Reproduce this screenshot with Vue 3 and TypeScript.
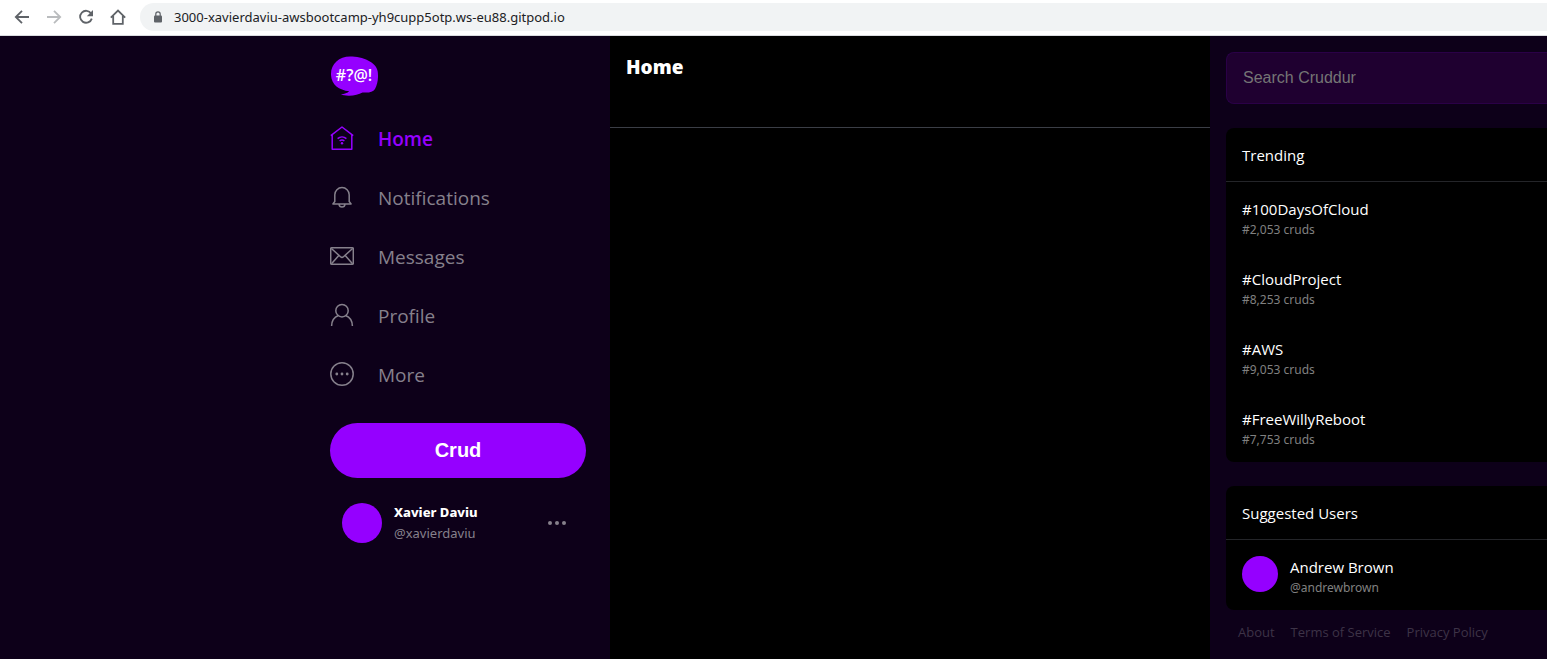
<script setup lang="ts">
import { ref } from 'vue'

interface Trend {
  tag: string
  count: string
}

const address = ref('3000-xavierdaviu-awsbootcamp-yh9cupp5otp.ws-eu88.gitpod.io')
const query = ref('')
const navItems = ['Home', 'Notifications', 'Messages', 'Profile', 'More']
const active = ref('Home')

const trends: Trend[] = [
  { tag: '#100DaysOfCloud', count: '#2,053 cruds' },
  { tag: '#CloudProject', count: '#8,253 cruds' },
  { tag: '#AWS', count: '#9,053 cruds' },
  { tag: '#FreeWillyReboot', count: '#7,753 cruds' },
]

const users = [{ name: 'Andrew Brown', handle: '@andrewbrown' }]
const footerLinks = ['About', 'Terms of Service', 'Privacy Policy']
</script>

<template>
  <div class="browser">
    <div class="toolbar">
      <button class="tool" type="button" aria-label="Back">
        <svg viewBox="0 0 16 16"><path d="M15 8H2M8 1.8 1.8 8 8 14.2" /></svg>
      </button>
      <button class="tool" type="button" aria-label="Forward" disabled>
        <svg viewBox="0 0 16 16"><path d="M1 8h13M8 1.8 14.2 8 8 14.2" /></svg>
      </button>
      <button class="tool" type="button" aria-label="Reload">
        <svg viewBox="0 0 16 16">
          <path d="M13.2 4.6A6 6 0 1 0 13.8 9.6" />
          <path class="solid" d="M15 1v6.2H8.8z" />
        </svg>
      </button>
      <button class="tool" type="button" aria-label="Home page">
        <svg viewBox="0 0 16 16"><path d="M.8 8.6 8 1.6l7.2 7M3.2 7v7.8h9.6V7" /></svg>
      </button>
      <label class="address">
        <svg viewBox="0 0 10 12" aria-hidden="true">
          <rect x="1" y="4.5" width="8" height="7" rx="1" fill="#5f6368" />
          <path d="M2.8 5V3a2.2 2.2 0 0 1 4.4 0v2" fill="none" stroke="#5f6368" stroke-width="1.2" />
        </svg>
        <input v-model="address" type="text" aria-label="Address" />
      </label>
    </div>

    <div class="app">
      <aside class="sidebar">
        <div class="sidebar-inner">
          <svg class="logo" viewBox="0 0 48 40" role="img" aria-label="Cruddur">
            <path
              d="M1 19C.5 8 9 .6 20 .5 33 .6 46 6 47.6 15c1 6 .2 13-2.6 18-2.2 3.4-7 4-12.5 3.4-3.5 1.800-9 3.600-14 3.400-3-.1-6-.6-7.500-1.200 3.500-.5 6.500-1.600 8.200-3.300C9 34 1.500 29 1 19Z"
              fill="#9500ff"
            />
            <text x="24" y="25" text-anchor="middle">#?@!</text>
          </svg>

          <nav>
            <a
              v-for="item in navItems"
              :key="item"
              href="#"
              class="nav-item"
              :class="{ active: active === item }"
              @click.prevent="active = item"
            >
              <svg viewBox="0 0 24 24" aria-hidden="true">
                <template v-if="item === 'Home'">
                  <path d="M.8 9.600 12 1l11.200 8.600M2.200 8.800v14.400h19.600V8.800" />
                  <path d="M7.600 12.600c2.600-2.300 6.200-2.300 8.800 0M9.600 15c1.500-1.200 3.300-1.200 4.800 0" />
                  <circle class="dot" cx="12" cy="17.300" r="1.200" />
                </template>
                <template v-else-if="item === 'Notifications'">
                  <path d="M4.800 16.500V9.800a7.200 7.200 0 0 1 14.400 0v6.700l1.900 2.400H2.900ZM9 19.200c.3 3.800 5.700 3.800 6 0" />
                </template>
                <template v-else-if="item === 'Messages'">
                  <rect x=".7" y="3.700" width="22.600" height="16.600" rx="1" />
                  <path d="m1.400 4.500 9.100 8.200c.9.800 2.100.8 3 0l9.100-8.200M1.500 19.700l7.300-8.200M22.500 19.700l-7.300-8.200" />
                </template>
                <template v-else-if="item === 'Profile'">
                  <circle cx="12" cy="7.700" r="6.200" />
                  <path d="M1.600 23c.1-5.300 2.700-8.900 6.800-10.500M22.400 23c-.1-5.300-2.700-8.900-6.800-10.500" />
                </template>
                <template v-else>
                  <circle cx="12" cy="12" r="11.200" />
                  <circle class="dot" cx="6.800" cy="12" r="1.400" />
                  <circle class="dot" cx="12" cy="12" r="1.400" />
                  <circle class="dot" cx="17.200" cy="12" r="1.400" />
                </template>
              </svg>
              <span>{{ item }}</span>
            </a>
          </nav>

          <button class="crud" type="button">Crud</button>

          <div class="profile">
            <div class="avatar"></div>
            <div class="identity">
              <div class="profile-name">Xavier Daviu</div>
              <div class="profile-handle">@xavierdaviu</div>
            </div>
            <button class="more" type="button" aria-label="Account options">
              <svg viewBox="0 0 20 6">
                <circle cx="3" cy="3" r="2" />
                <circle cx="10" cy="3" r="2" />
                <circle cx="17" cy="3" r="2" />
              </svg>
            </button>
          </div>
        </div>
      </aside>

      <main class="feed">
        <header><h1>Home</h1></header>
      </main>

      <aside class="discover">
        <input v-model="query" class="search" type="text" placeholder="Search Cruddur" aria-label="Search Cruddur" />

        <section class="panel">
          <h2>Trending</h2>
          <a v-for="trend in trends" :key="trend.tag" href="#" class="row">
            <span class="lines">
              <span class="title">{{ trend.tag }}</span>
              <span class="sub">{{ trend.count }}</span>
            </span>
          </a>
        </section>

        <section class="panel">
          <h2>Suggested Users</h2>
          <a v-for="user in users" :key="user.handle" href="#" class="row">
            <span class="avatar small"></span>
            <span class="lines">
              <span class="title">{{ user.name }}</span>
              <span class="sub">{{ user.handle }}</span>
            </span>
          </a>
        </section>

        <footer>
          <a v-for="link in footerLinks" :key="link" href="#">{{ link }}</a>
        </footer>
      </aside>
    </div>
  </div>
</template>

<style>
body {
  margin: 0;
  background: #0d0019;
}
</style>

<style scoped>
.browser {
  min-height: 100vh;
  display: flex;
  flex-direction: column;
  font-family: 'Open Sans', 'Noto Sans', sans-serif;
  color: #fff;
}

.browser * {
  box-sizing: border-box;
}

a {
  color: inherit;
  text-decoration: none;
}

button {
  border: 0;
  padding: 0;
  background: none;
  cursor: pointer;
}

.toolbar {
  display: flex;
  align-items: center;
  gap: 16px;
  height: 36px;
  padding: 0 0 1px 14px;
  background: #fff;
  border-bottom: 1px solid #dadce0;
}

.tool {
  width: 16px;
  height: 16px;
}

.tool svg {
  display: block;
  fill: none;
  stroke: #5f6368;
  stroke-width: 1.8;
}

.tool:disabled svg {
  stroke: #babcbe;
}

.tool .solid {
  fill: #5f6368;
  stroke: none;
}

.address {
  flex: 1;
  display: flex;
  align-items: center;
  gap: 11px;
  height: 28px;
  margin-left: -2px;
  padding-left: 13px;
  border-radius: 14px 0 0 14px;
  background: #f1f3f4;
}

.address svg {
  width: 10px;
  height: 12px;
}

.address input {
  flex: 1;
  padding: 0;
  border: 0;
  outline: 0;
  background: none;
  color: #202124;
  font: 13px/20px 'Noto Sans', sans-serif;
}

.app {
  flex: 1;
  display: grid;
  grid-template-columns: minmax(304px, 610px) minmax(0, 600px) minmax(300px, 1fr);
}

.sidebar {
  display: flex;
  justify-content: flex-end;
  padding: 20px 24px;
}

.sidebar-inner {
  width: 256px;
}

.logo {
  display: block;
  width: 48px;
  height: 40px;
  margin-bottom: 13px;
}

.logo text {
  fill: #fff;
  font: 600 16px 'Open Sans', 'Noto Sans', sans-serif;
}

.nav-item {
  display: flex;
  align-items: center;
  gap: 24px;
  padding: 15px 0 16px;
  color: #86808c;
  font-size: 19px;
  line-height: 26px;
}

.nav-item span {
  padding-top: 2px;
}

.nav-item.active {
  color: #9500ff;
  font-weight: 600;
}

.nav-item svg {
  width: 24px;
  height: 24px;
  fill: none;
  stroke: currentColor;
  stroke-width: 1.5;
  stroke-linejoin: round;
}

.nav-item .dot {
  fill: currentColor;
  stroke: none;
}

.crud {
  display: block;
  width: 100%;
  height: 55px;
  margin-top: 19px;
  border-radius: 28px;
  background: #9500ff;
  color: #fff;
  font: 700 20px 'Liberation Sans', Arial, sans-serif;
}

.profile {
  display: flex;
  align-items: center;
  gap: 12px;
  margin-top: 24px;
  padding: 0 19px 0 12px;
}

.avatar {
  flex: none;
  width: 40px;
  height: 40px;
  border-radius: 50%;
  background: #9500ff;
}

.avatar.small {
  width: 36px;
  height: 36px;
}

.identity {
  flex: 1;
  font-family: 'Noto Sans', sans-serif;
  font-size: 13px;
  line-height: 21px;
}

.profile-name {
  font-weight: 800;
}

.profile-handle {
  color: #86808c;
}

.more svg {
  display: block;
  width: 20px;
  height: 6px;
  fill: #86808c;
}

.feed {
  background: #000;
}

.feed header {
  min-height: 92px;
  padding: 16px;
  border-bottom: 1px solid #3b3e46;
}

h1 {
  margin: 0;
  font-size: 19px;
  font-weight: 800;
  line-height: 30px;
}

.discover {
  padding: 16px 0 16px 16px;
}

.search {
  display: block;
  width: 100%;
  height: 52px;
  padding: 0 16px;
  border: 1px solid #2a0047;
  border-right: 0;
  border-radius: 8px 0 0 8px;
  outline: 0;
  background: #1f0030;
  color: #fff;
  font: 16px 'Liberation Sans', Arial, sans-serif;
}

.search::placeholder {
  color: #757575;
  opacity: 1;
}

.panel {
  margin-top: 24px;
  border-radius: 8px 0 0 8px;
  background: #000;
}

h2 {
  margin: 0;
  padding: 16px 16px 14px;
  border-bottom: 1px solid #242529;
  font-size: 15px;
  font-weight: 400;
  line-height: 23px;
}

.row {
  display: flex;
  align-items: flex-start;
  gap: 12px;
  padding: 16px 16px 14px;
}

.lines {
  display: flex;
  flex-direction: column;
}

.title {
  font-size: 15px;
  line-height: 23px;
}

.sub {
  color: #808080;
  font-family: 'Noto Sans', sans-serif;
  font-size: 12px;
  line-height: 17px;
}

footer {
  display: flex;
  gap: 16px;
  padding: 12px;
  color: #3d3347;
  font-size: 13px;
  line-height: 20px;
}
</style>
